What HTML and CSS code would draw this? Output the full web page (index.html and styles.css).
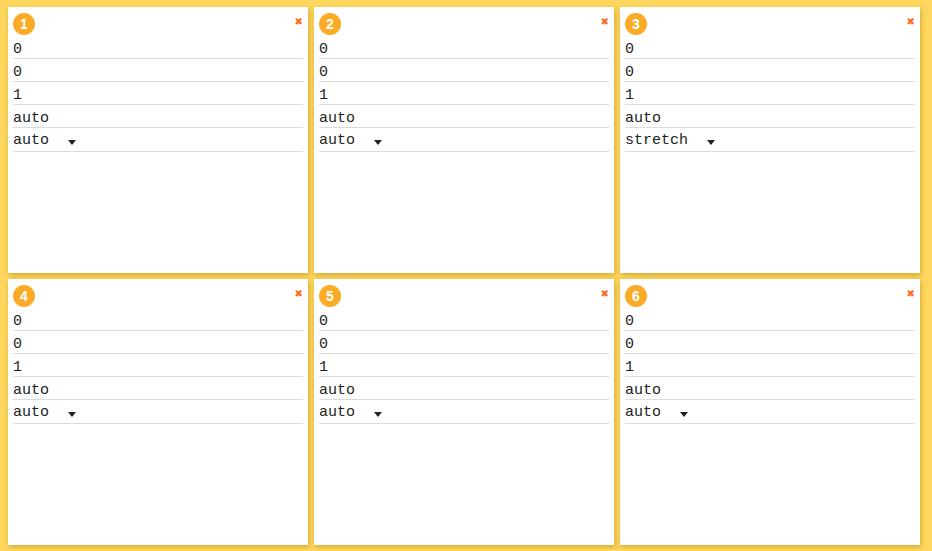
FILE: index.html
```html
<!DOCTYPE html>
<html>
<head>
<meta charset="utf-8">
<link rel="stylesheet" href="styles.css">
</head>
<body>
<div class="board">
  <div class="card">
    <div class="head"><span class="badge">1</span><span class="close">&#x2716;</span></div>
    <div class="row">0</div><div class="row">0</div><div class="row">1</div><div class="row">auto</div>
    <div class="row sel"><span class="val">auto</span><span class="caret"></span></div>
  </div>
  <div class="card">
    <div class="head"><span class="badge">2</span><span class="close">&#x2716;</span></div>
    <div class="row">0</div><div class="row">0</div><div class="row">1</div><div class="row">auto</div>
    <div class="row sel"><span class="val">auto</span><span class="caret"></span></div>
  </div>
  <div class="card">
    <div class="head"><span class="badge">3</span><span class="close">&#x2716;</span></div>
    <div class="row">0</div><div class="row">0</div><div class="row">1</div><div class="row">auto</div>
    <div class="row sel"><span class="val">stretch</span><span class="caret"></span></div>
  </div>
  <div class="card">
    <div class="head"><span class="badge">4</span><span class="close">&#x2716;</span></div>
    <div class="row">0</div><div class="row">0</div><div class="row">1</div><div class="row">auto</div>
    <div class="row sel"><span class="val">auto</span><span class="caret"></span></div>
  </div>
  <div class="card">
    <div class="head"><span class="badge">5</span><span class="close">&#x2716;</span></div>
    <div class="row">0</div><div class="row">0</div><div class="row">1</div><div class="row">auto</div>
    <div class="row sel"><span class="val">auto</span><span class="caret"></span></div>
  </div>
  <div class="card">
    <div class="head"><span class="badge">6</span><span class="close">&#x2716;</span></div>
    <div class="row">0</div><div class="row">0</div><div class="row">1</div><div class="row">auto</div>
    <div class="row sel"><span class="val">auto</span><span class="caret"></span></div>
  </div>
</div>
</body>
</html>
```
FILE: styles.css
```css
html, body {
  margin: 0;
  height: 100%;
}
body {
  background: #ffd75e;
  font-family: "Liberation Mono", monospace;
}
.board {
  display: grid;
  grid-template-columns: repeat(3, 300px);
  grid-template-rows: repeat(2, 266px);
  gap: 6px;
  padding: 7px 8px;
}
.card {
  background: #fff;
  box-shadow: 1px 2px 5px rgba(150, 110, 0, 0.45);
  padding: 5px;
  display: flex;
  flex-direction: column;
}
.head {
  display: flex;
  justify-content: space-between;
  align-items: flex-start;
  height: 24px;
}
.badge {
  width: 22px;
  height: 22px;
  border-radius: 50%;
  background: #fbab26;
  color: #fff;
  font-family: "Liberation Sans", sans-serif;
  font-weight: bold;
  font-size: 14px;
  display: flex;
  align-items: center;
  justify-content: center;
  margin-top: 1px;
}
.close {
  color: #ff6a1a;
  font-family: "DejaVu Sans", sans-serif;
  font-size: 10px;
  line-height: 10px;
  margin-top: 5px;
  margin-right: 0;
}
.row {
  height: 19px;
  padding-top: 3px;
  line-height: 22px;
  border-bottom: 1px solid #dcdcdc;
  font-size: 15px;
  color: #222;
}
.row.sel {
  height: 23px;
  padding-top: 0;
  display: flex;
  align-items: center;
}
.sel .val {
  margin-top: 2px;
}
.caret {
  width: 0;
  height: 0;
  border-left: 4.5px solid transparent;
  border-right: 4.5px solid transparent;
  border-top: 5px solid #222;
  margin-left: 19px;
  margin-top: 5px;
}
```
